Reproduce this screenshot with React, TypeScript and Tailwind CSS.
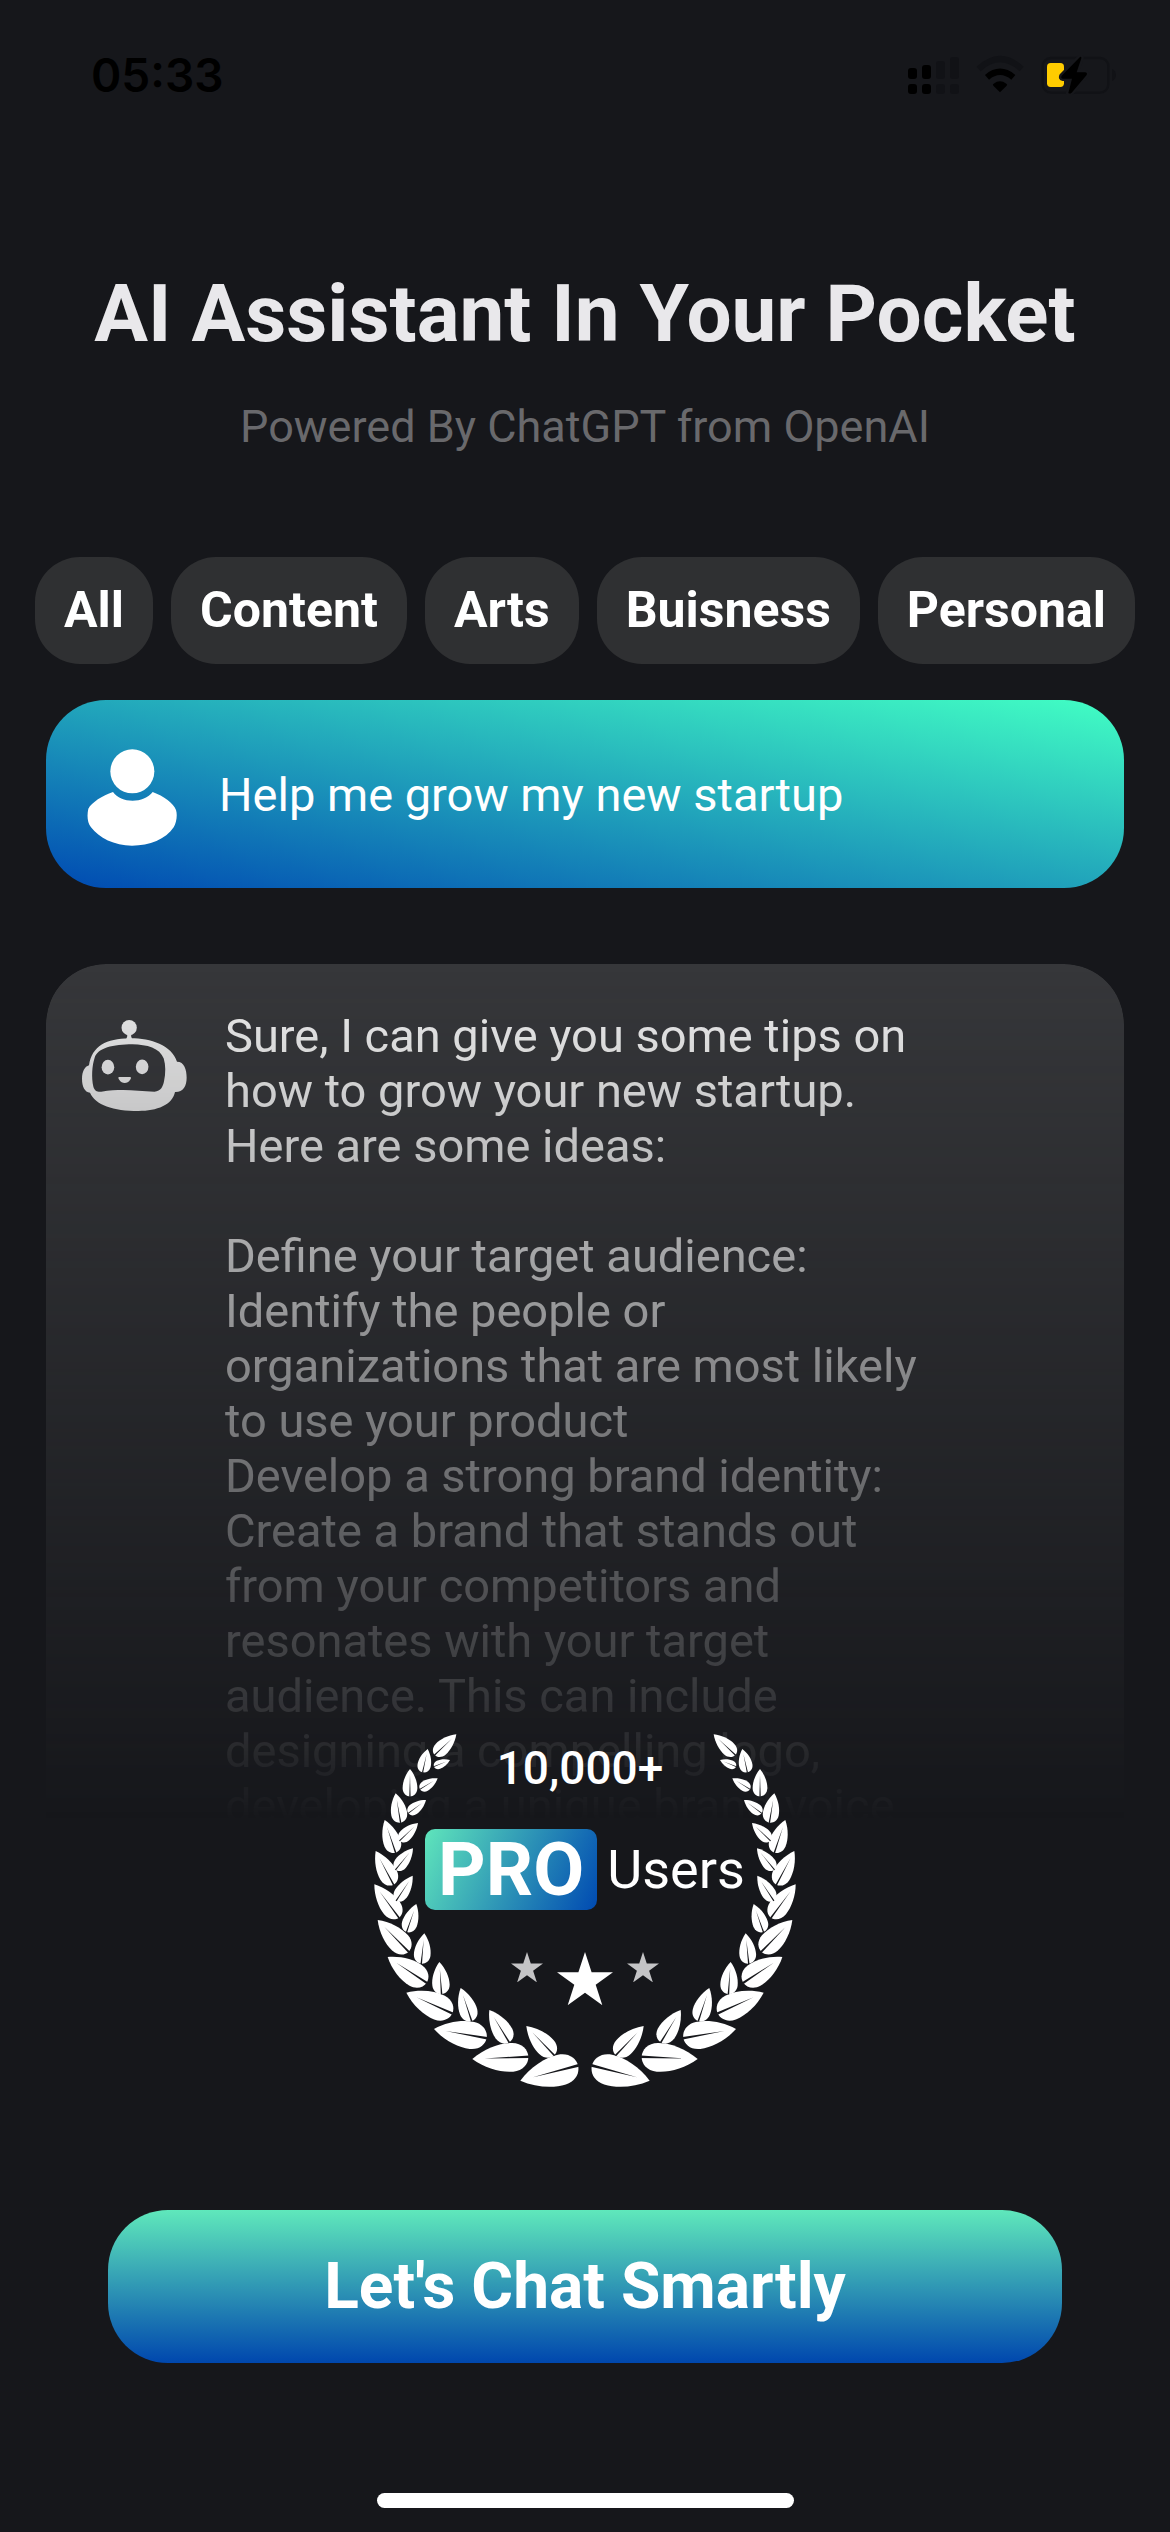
const categories = ["All", "Content", "Arts", "Buisness", "Personal"];

const answer = `Sure, I can give you some tips on how to grow your new startup. Here are some ideas:

Define your target audience: Identify the people or organizations that are most likely to use your product
Develop a strong brand identity: Create a brand that stands out from your competitors and resonates with your target audience. This can include designing a compelling logo, developing a unique brand voice`;

// [tipX, tipY, baseX, baseY, width]
const leaves = [
  [289, 43, 224, 105, 44],
  [203, 87, 188, 157, 40],
  [150, 147, 150, 229, 44],
  [107, 220, 122, 308, 48],
  [74, 300, 107, 398, 52],
  [47, 393, 101, 494, 56],
  [43, 493, 117, 593, 60],
  [53, 600, 146, 695, 66],
  [83, 711, 200, 788, 72],
  [139, 818, 277, 880, 78],
  [222, 927, 380, 954, 82],
  [337, 1017, 505, 1010, 86],
  [481, 1082, 654, 1036, 92],
  [270, 120, 222, 140, 26],
  [233, 175, 180, 208, 32],
  [198, 240, 145, 280, 34],
  [174, 309, 119, 362, 38],
  [159, 385, 107, 449, 40],
  [158, 467, 109, 542, 42],
  [169, 552, 140, 636, 46],
  [193, 640, 184, 731, 50],
  [238, 726, 245, 822, 52],
  [302, 804, 335, 903, 54],
  [388, 870, 448, 967, 58],
  [499, 918, 583, 1006, 60],
];

function Branch() {
  return (
    <>
      {leaves.map(([x1, y1, x2, y2, w]) => {
        const length = Math.hypot(x2 - x1, y2 - y1);
        const angle = (Math.atan2(y2 - y1, x2 - x1) * 180) / Math.PI;
        return (
          <g
            key={`${x1}-${y1}`}
            transform={`translate(${x1} ${y1}) rotate(${angle}) scale(${length / 100} ${w / 100})`}
          >
            <path
              d="M0 0C22 -34 50 -52 72 -50C90 -48 100 -24 100 0C100 24 90 48 72 50C50 52 22 34 0 0Z"
              fill="#fff"
            />
            <path d="M22 0L101 -4V5Z" fill="#16171b" />
          </g>
        );
      })}
    </>
  );
}

function Laurel() {
  return (
    <svg viewBox="42 36 1266 1068" className="absolute inset-0 h-full w-full" aria-hidden="true">
      <Branch />
      <g transform="translate(1350 0) scale(-1 1)">
        <Branch />
      </g>
    </svg>
  );
}

function Star({ className }: { className: string }) {
  return (
    <svg viewBox="0 0 100 95" className={className} aria-hidden="true">
      <path
        d="M50 0L61.800 36.300H100L69.100 58.700L80.900 95L50 72.600L19.100 95L30.900 58.700L0 36.300H38.200Z"
        fill="currentColor"
      />
    </svg>
  );
}

function UserIcon() {
  return (
    <svg viewBox="82 67 270 309" className="h-[103px] w-[90px] shrink-0" fill="#fff" aria-hidden="true">
      <circle cx="218" cy="152" r="66" />
      <path d="M160 214C184 249 253 249 279 214C312 226 342 248 349 268C354 284 350 306 342 320C318 356 270 375 217 375C164 375 118 352 94 320C82 304 82 282 86 264C96 246 128 224 160 214Z" />
    </svg>
  );
}

function RobotIcon() {
  return (
    <svg viewBox="66 62 316 274" className="h-[91px] w-[105px] shrink-0" fill="#ededed" aria-hidden="true">
      <circle cx="208" cy="85" r="23" />
      <path d="M202 102H214V112L218 122H198L202 112Z" />
      <path
        fillRule="evenodd"
        d="M208 117C270 116 336 136 352 188C374 188 381 212 381 236C381 262 370 280 346 279C338 318 292 336 236 336C160 336 106 318 90 281C74 280 66 262 66 240C66 216 74 202 87 198C96 140 140 118 208 117ZM218 135C160 135 112 146 104 176C96 200 94 236 100 262C104 276 112 279 124 278C148 274 170 273 190 273C220 274 250 277 284 278C304 277 310 262 313 246C318 222 318 198 312 178C300 146 262 136 218 135Z"
      />
      <ellipse cx="144" cy="204" rx="19" ry="22" />
      <ellipse cx="247" cy="203" rx="19" ry="22" />
      <path d="M178 234H210C215 234 214 238 211 242C203 255 186 255 178 242C175 238 174 234 178 234Z" />
    </svg>
  );
}

function StatusIcons() {
  return (
    <svg viewBox="78 42 633 120" className="h-10 w-[211px]" aria-hidden="true">
      <g fill="#000">
        <rect x="81" y="81" width="27" height="33" rx="9" />
        <rect x="123" y="72" width="27" height="42" rx="9" />
        <rect x="81" y="129" width="27" height="30" rx="9" />
        <rect x="123" y="129" width="27" height="30" rx="9" />
      </g>
      <g fill="#111216">
        <rect x="165" y="60" width="27" height="54" rx="9" />
        <rect x="207" y="48" width="27" height="66" rx="9" />
        <rect x="165" y="129" width="27" height="30" rx="9" />
        <rect x="207" y="129" width="27" height="30" rx="9" />
      </g>
      <path d="M357 154L337 134Q334 130 338 128Q357 114 376 128Q380 130 377 134Z" fill="#000" />
      <path d="M318 109Q357 76 397 109" stroke="#000" strokeWidth="19" fill="none" />
      <path d="M293 84Q357 24 422 84" stroke="#111216" strokeWidth="18" fill="none" />
      <rect x="485" y="51" width="197" height="104" rx="25" fill="none" stroke="#111216" strokeWidth="7" />
      <path d="M693 84Q705 90 705 102Q705 114 693 120Z" fill="#111216" />
      <rect x="498" y="66" width="51" height="72" rx="11" fill="#ffcc00" />
      <path
        d="M597 48L542 104Q538 112 546 113H573L562 156Q566 160 572 155L617 102Q620 94 612 94H587L601 52Q602 46 597 48Z"
        fill="#000"
        stroke="#16171b"
        strokeWidth="14"
        paintOrder="stroke"
      />
    </svg>
  );
}

export default function App() {
  return (
    <div className="flex min-h-screen flex-col items-center bg-[#16171b] font-[Roboto,sans-serif] text-white">
      <div className="flex h-[150px] w-full items-center justify-between pr-[52px] pl-[91px]">
        <span className="font-[Inter,sans-serif] text-[46px] font-semibold text-black">05:33</span>
        <StatusIcons />
      </div>

      <header className="mt-[116px] text-center">
        <h1 className="text-[80px] leading-[96px] font-bold text-[#e9e8eb]">AI Assistant In Your Pocket</h1>
        <p className="mt-[37px] text-[45px] leading-[56px] text-[#69696c]">Powered By ChatGPT from OpenAI</p>
      </header>

      <nav className="mt-[102px] flex gap-[18px]">
        {categories.map((category) => (
          <button
            key={category}
            type="button"
            className="h-[107px] rounded-[45px] bg-[#2f3032] px-[29px] text-[50px] font-bold"
          >
            {category}
          </button>
        ))}
      </nav>

      <main className="w-full px-[46px]">
        <div className="mt-9 flex h-[188px] items-center gap-[42px] rounded-[60px] bg-linear-to-tr/srgb from-[#004ab2] to-[#42ffc4] px-[41px]">
          <UserIcon />
          <p className="text-[47px] leading-[55px]">Help me grow my new startup</p>
        </div>

        <div className="mt-[76px] flex h-[856px] items-start gap-[38px] overflow-hidden rounded-t-[60px] bg-[#36373a] [mask-image:linear-gradient(to_bottom,black,transparent)] px-9 pt-11">
          <div className="pt-3">
            <RobotIcon />
          </div>
          <p className="max-w-[702px] text-[47px] leading-[55px] whitespace-pre-line text-[#f0f0f0]">{answer}</p>
        </div>
      </main>

      <section className="relative -mt-[88px] flex h-[356px] w-[422px] flex-col items-center">
        <Laurel />
        <p className="relative mt-2 pr-2.5 text-[46px] leading-[56px] font-medium">10,000+</p>
        <div className="relative mt-[33px] flex items-center gap-2.5">
          <span className="flex h-[81px] items-center rounded-[10px] bg-[linear-gradient(115deg,#5fe5bb,#004ab2)] px-[13px] text-[74px] leading-[81px] font-bold">
            PRO
          </span>
          <span className="text-[54px] leading-[81px]">Users</span>
        </div>
        <div className="relative mt-[42px] flex items-start gap-3.5">
          <Star className="w-8 text-[#c4c4c6]" />
          <Star className="w-14" />
          <Star className="w-8 text-[#c4c4c6]" />
        </div>
      </section>

      <div className="mt-[122px] w-full px-[108px]">
        <button
          type="button"
          className="h-[153px] w-full rounded-[60px] bg-linear-to-b/srgb from-[#5fe8bb] to-[#0047ae] text-[64px] font-bold"
        >
          Let's Chat Smartly
        </button>
      </div>

      <div className="mt-auto mb-6 h-[15px] w-[417px] rounded-full bg-white" />
    </div>
  );
}
